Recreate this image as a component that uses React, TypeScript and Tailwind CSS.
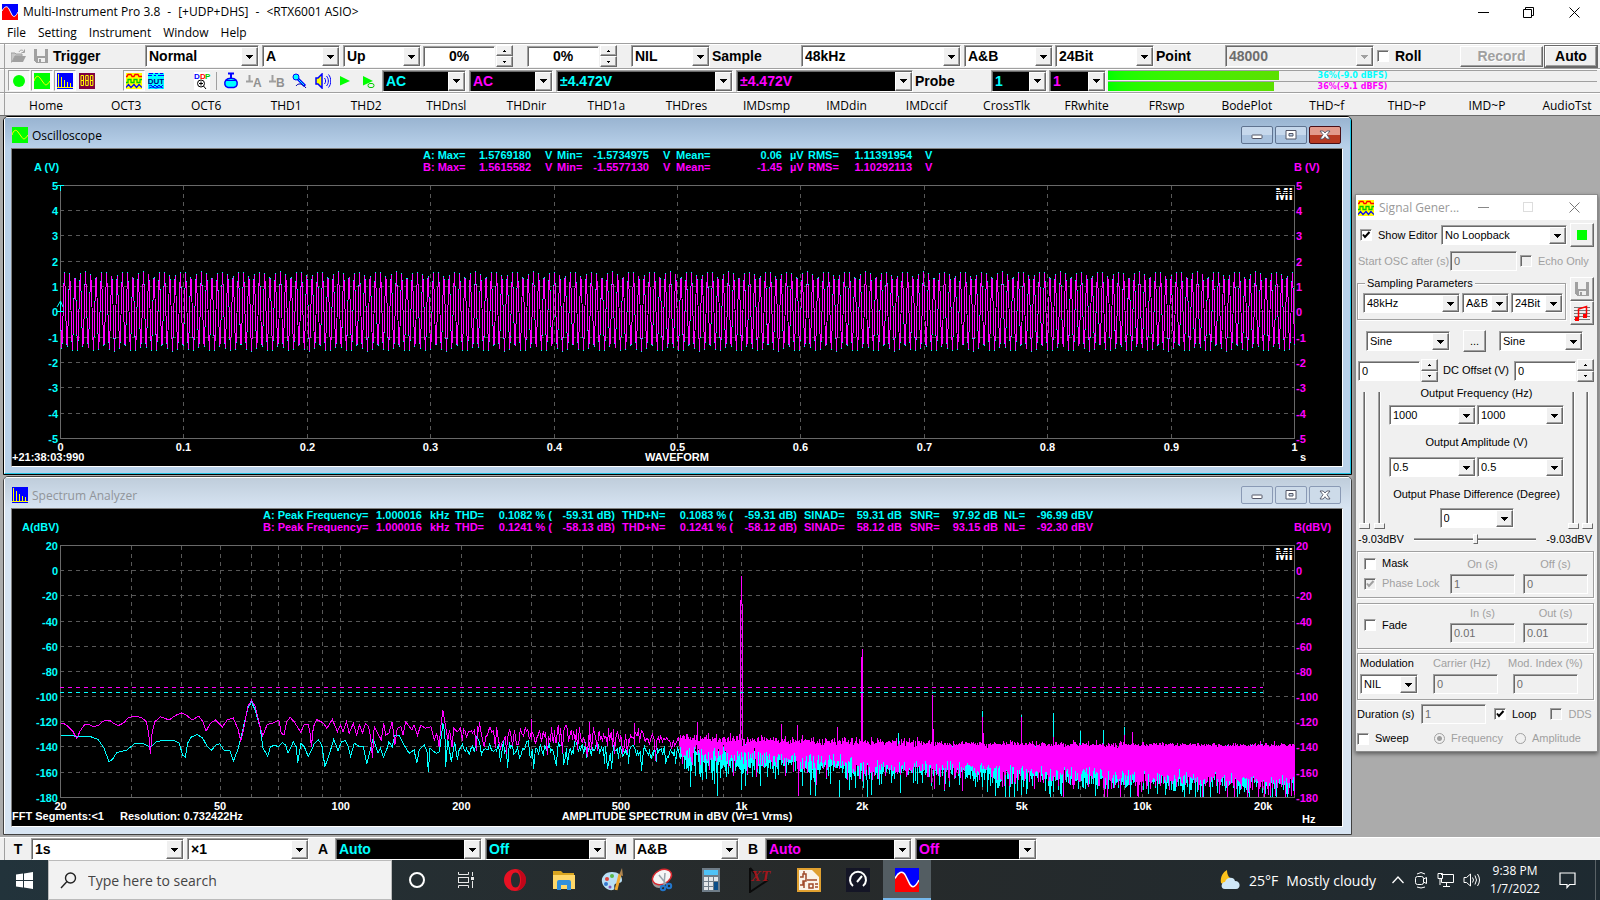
import React from "react";

const sunken =
  "border border-t-[#a0a0a0] border-l-[#a0a0a0] border-r-white border-b-white shadow-[inset_1px_1px_0_#696969]";
const raised =
  "border border-t-white border-l-white border-r-[#696969] border-b-[#696969] bg-[#f0f0f0] shadow-[inset_-1px_-1px_0_#a0a0a0]";

/* ---------- basic controls ---------- */

type SelectProps = {
  value: string;
  label: string;
  className?: string;
  tone?: string;
  disabled?: boolean;
};

function Select({ value, label, className = "", tone = "bg-white text-black", disabled }: SelectProps) {
  return (
    <span className={`relative flex shrink-0 ${sunken} ${tone} ${className}`}>
      <select
        aria-label={label}
        disabled={disabled}
        defaultValue={value}
        className="h-full w-full appearance-none bg-transparent pl-[3px] outline-none"
      >
        <option>{value}</option>
      </select>
      <span
        className={`pointer-events-none absolute top-px right-0 bottom-0 flex w-[17px] items-center justify-center ${raised}`}
      >
        <svg width="7" height="4" viewBox="0 0 7 4" shapeRendering="crispEdges">
          <path d="M0 0H7V1H6V2H5V3H4V4H3V3H2V2H1V1H0Z" fill={disabled ? "#a0a0a0" : "#000"} />
        </svg>
      </span>
    </span>
  );
}

function Spinner({ className = "h-[22px]" }: { className?: string }) {
  return (
    <span className={`flex w-[17px] shrink-0 flex-col ${className}`}>
      <button aria-label="Increase" className={`flex flex-1 items-center justify-center ${raised}`}>
        <svg width="3" height="2" shapeRendering="crispEdges"><path d="M1 0H2V1H3V2H0V1H1Z" /></svg>
      </button>
      <button aria-label="Decrease" className={`flex flex-1 items-center justify-center ${raised}`}>
        <svg width="3" height="2" shapeRendering="crispEdges"><path d="M0 0H3V1H2V2H1V1H0Z" /></svg>
      </button>
    </span>
  );
}

function Box({ value, label, className = "", disabled }: SelectProps) {
  return (
    <input
      aria-label={label}
      defaultValue={value}
      disabled={disabled}
      className={`min-w-0 shrink-0 px-[3px] outline-none ${sunken} ${
        disabled ? "bg-[#f0f0f0] text-[#6d6d6d]" : "bg-white text-black"
      } ${className}`}
    />
  );
}

function Check({
  text,
  checked,
  disabled,
  className = "",
}: {
  text: string;
  checked?: boolean;
  disabled?: boolean;
  className?: string;
}) {
  return (
    <label className={`flex shrink-0 items-center gap-[6px] ${disabled ? "text-[#a0a0a0]" : ""} ${className}`}>
      <span className="relative flex">
        <input
          type="checkbox"
          defaultChecked={checked}
          disabled={disabled}
          className={`size-3 appearance-none ${sunken} ${disabled ? "bg-[#f0f0f0]" : "bg-white"}`}
        />
        {checked && (
          <svg className="pointer-events-none absolute inset-0" width="12" height="12" viewBox="0 0 12 12">
            <path d="M3 5.5L5 8L9.5 3" fill="none" stroke={disabled ? "#a0a0a0" : "#000"} strokeWidth="2" />
          </svg>
        )}
      </span>
      <span>{text}</span>
    </label>
  );
}

/* ---------- small drawings ---------- */

const SineLogo = ({ size = 16 }: { size?: number }) => (
  <svg width={size} height={size} viewBox="0 0 16 16">
    <rect width="16" height="16" fill="#00f" />
    <path d="M0 7C2 3 5 1 7 5L10 11C12 14 14 12 16 8V16H0Z" fill="#f00" />
    <path d="M0 7C2 3 5 1 7 5L10 11C12 14 14 12 16 8" fill="none" stroke="#fff" strokeWidth="1" />
  </svg>
);
const ScopeIcon = () => (
  <svg width="16" height="16" viewBox="0 0 16 16">
    <rect width="16" height="16" fill="#0f0" />
    <path d="M0 8C1.500 3 4 2 6 5L10 10.500C12 13.500 14 11 16 8" fill="none" stroke="#ff0" />
  </svg>
);
const BarsIcon = () => (
  <svg width="16" height="16" viewBox="0 0 16 16" shapeRendering="crispEdges">
    <rect width="16" height="16" fill="#00f" />
    <path d="M1.500 1V14M4.500 4V14M7.500 7V14M10.500 9V14M13.500 10V14M0 14.500H16" stroke="#ff0" />
  </svg>
);
const WavesIcon = () => (
  <svg width="16" height="16" viewBox="0 0 16 16" fill="none">
    <rect width="16" height="16" fill="#ff0" />
    <path d="M0 3.500H1L2 1.500H5L6 3.500H8L9 1.500H12L13 3.500H16" stroke="#f00" strokeWidth="1.300" />
    <path d="M0 9.500H2V6.500H5V9.500H8V6.500H11V9.500H14V6.500H16" stroke="#0c0" strokeWidth="1.300" />
    <path d="M0 14.500L2.500 11.500L5 14.500L8 11.500L10.500 14.500L13 11.500L16 14.500" stroke="#00f" strokeWidth="1.200" />
  </svg>
);
const DigitsIcon = () => (
  <svg width="16" height="16" viewBox="0 0 16 16">
    <rect width="16" height="16" fill="#800040" />
    <path
      d="M2 2.500h2.500v5h-2.500zM2 7.500h2.500v5h-2.500zM6.700 2.500h2.500v5h-2.500zM6.700 7.500h2.500v5h-2.500zM11.400 2.500h2.500v5h-2.500zM11.400 7.500h2.500v5h-2.500z"
      fill="none"
      stroke="#ff0"
      strokeWidth="1"
    />
  </svg>
);
const DutIcon = () => (
  <svg width="16" height="16" viewBox="0 0 16 16">
    <rect width="16" height="16" fill="#0ff" />
    <path d="M1 .5H5M7 .5H10M12 .5H15M0 2.500H4M6 2.500H8M10 2.500H16" stroke="#00f" />
    <text x="8" y="10.500" fontSize="8" fontWeight="700" textAnchor="middle" fill="#000080" fontFamily="Liberation Sans">DUT</text>
    <path d="M1 13L3 12L5 14L7 12L9 14L11 12L13 14L15 12M1 15L4 14L8 15L12 14L15 15" fill="none" stroke="#00f" />
  </svg>
);
const DdpIcon = () => (
  <svg width="18" height="18" viewBox="0 0 18 18">
    <rect x="1" width="16" height="18" fill="#fff" />
    <g fontSize="8" fontWeight="700" fontFamily="Liberation Sans">
      <text x="1" y="7" fill="#00f">D</text>
      <text x="7" y="7" fill="#f00">D</text>
      <text x="12" y="7" fill="#0c0">P</text>
    </g>
    <circle cx="8" cy="11.500" r="3.500" fill="#fff" stroke="#000" />
    <path d="M6 11.500H10M8 9.500V13.500M10.500 14L13 17" stroke="#000" />
  </svg>
);
const BottleIcon = () => (
  <svg width="16" height="17" viewBox="0 0 16 17">
    <path d="M5 1.500H11M8 2V6" stroke="#00f" strokeWidth="2" />
    <path d="M3 8C5 5.500 11 5.500 13 8C15.500 11 14 15 11 15.500H5C2 15 .5 11 3 8Z" fill="#0ff" stroke="#00f" strokeWidth="1.500" />
    <path d="M3 8.500H13" stroke="#00f" />
  </svg>
);
const GroundIcon = ({ letter }: { letter: string }) => (
  <svg width="17" height="16" viewBox="0 0 17 16">
    <path d="M3.500 2V8M0 8.500H7" stroke="#a0a0a0" strokeWidth="2" />
    <text x="7" y="14" fontSize="12" fill="#909090" fontFamily="Liberation Sans">{letter}</text>
  </svg>
);
const MicIcon = () => (
  <svg width="16" height="16" viewBox="0 0 16 16">
    <circle cx="4" cy="4" r="3" fill="#0ff" stroke="#00f" />
    <path d="M6 6L13 13" stroke="#00f" strokeWidth="3" />
    <path d="M6.500 6.500L12 12" stroke="#0ff" />
    <path d="M4 13C6 10 10 10 14 15" fill="none" stroke="#00a" />
  </svg>
);
const SpeakerIcon = () => (
  <svg width="16" height="16" viewBox="0 0 16 16" fill="none">
    <path d="M1 5H3L7 1V15L3 11H1Z" fill="#ff0" stroke="#00f" strokeWidth="1.500" />
    <path d="M9.500 5C11 7 11 9 9.500 11M11.500 3C14 6 14 10 11.500 13M13.500 1.500C16.500 5 16.500 11 13.500 14.500" stroke="#00f" />
  </svg>
);
const PlayIcon = ({ loop }: { loop?: boolean }) => (
  <svg width="16" height="16" viewBox="0 0 16 16">
    <path d="M3 3L13 8L3 12.500Z" fill="#0f0" />
    {loop && <rect x="8" y="10.500" width="6" height="4" rx="2" fill="#f0f0f0" stroke="#0c0" />}
  </svg>
);
const FloppyIcon = () => (
  <svg width="16" height="16" viewBox="0 0 16 16" shapeRendering="crispEdges">
    <path d="M1 1H15V15H3L1 13Z" fill="#a0a0a0" />
    <rect x="4" y="1" width="8" height="7" fill="#f0f0f0" />
    <rect x="5" y="10" width="7" height="4" fill="#f0f0f0" />
    <rect x="6" y="11" width="2" height="3" fill="#a0a0a0" />
  </svg>
);
const FolderIcon = () => (
  <svg width="16" height="16" viewBox="0 0 16 16">
    <path d="M0 14V5H4L5 6H11V8H4L1 14Z" fill="#c8c8c8" stroke="#a0a0a0" />
    <path d="M1 14L4 8H15L12 14Z" fill="#a0a0a0" />
    <path d="M8 4C9 1.500 12 1.500 13 4M13.500 1.500V4.500H10.500" fill="none" stroke="#a0a0a0" />
  </svg>
);

/* ---------- traces ---------- */

function randomSource(seed: number) {
  let s = seed;
  return () => {
    s = (s * 1664525 + 1013904223) % 4294967296;
    return (s + 1) / 4294967297;
  };
}

const PLOT_LEFT = 60.5;
const PLOT_RIGHT = 1294.5;

function sinePath(amplitude: number) {
  const pts: string[] = [];
  for (let i = 0; i <= 1234; i++) {
    const y = 311.5 + Math.sin((2 * Math.PI * i) / 5.27) * amplitude;
    pts.push(`${PLOT_LEFT + i},${y.toFixed(1)}`);
  }
  return pts.join(" ");
}

const DECADE = 400.9;
const freqX = (f: number) => PLOT_LEFT + DECADE * Math.log10(f / 20);
const dbY = (db: number) => 545.5 + ((20 - db) * 251.7) / 200;

const lowB =
  "180,762 188,760 200,768 215,783 227,806 237,783 250,764 262,763 275,770 292,766 305,754 322,750 335,759 350,767 365,759 380,743 400,738 420,744 433,755 440,790 445,853 450,790 458,755 475,740 500,750 520,736 537,729 552,736 568,750 588,738 600,755 610,783 622,760 637,750 658,771 672,750 690,744 705,780 712,815 722,770 733,710 744,690 755,710 768,765 777,798 790,764 810,758 825,750 832,790 840,795 848,755 858,742 870,755 890,787 900,762 912,762 917,790 921,830 927,770 937,749 955,758 967,775 983,748 998,785 1007,765 1015,785 1025,755 1033,790 1045,760 1055,795 1063,765 1073,790 1081,760 1090,770 1096,800 1102,863 1107,770 1120,795 1128,810 1135,760 1141,795 1150,790 1160,755 1168,825 1175,775 1186,770 1192,795 1200,755 1218,780 1225,765 1235,795 1245,765 1258,775 1275,770 1285,810 1292,790 1299,830 1304,770 1310,720 1318,770 1325,810 1330,780 1337,830 1342,775 1352,785 1362,775";
const lowA =
  "180,798 200,796 225,799 265,799 290,808 308,835 322,875 333,868 345,848 375,840 400,820 425,822 445,832 462,815 490,810 515,811 530,820 540,855 548,862 555,820 565,802 583,793 600,805 612,828 625,841 638,826 650,821 662,840 680,842 690,874 705,835 718,780 733,715 744,697 755,720 770,775 778,835 792,858 800,830 812,826 824,830 835,818 845,825 852,850 868,815 876,830 881,878 890,820 900,830 912,860 922,840 930,820 942,810 952,825 961,890 975,850 987,808 1000,842 1010,815 1022,812 1030,830 1037,858 1048,820 1060,828 1075,830 1085,882 1095,840 1104,805 1118,848 1125,835 1134,862 1145,835 1150,815 1160,830 1168,795 1180,795 1195,825 1210,850 1225,840 1233,880 1240,840 1255,825 1263,845 1267,905 1272,835 1290,850 1300,845 1310,760 1316,790 1318,890 1325,810 1335,875 1345,815 1353,870 1358,840";

const lowPoints = (s: string) =>
  s.split(" ").map((p) => {
    const [x, y] = p.split(",").map(Number);
    return `${(x / 2.958).toFixed(1)},${(470 + y / 3).toFixed(1)}`;
  });

type Level = [number, number];
function level(table: Level[], f: number) {
  for (let i = 1; i < table.length; i++) {
    if (f <= table[i][0]) {
      const [f0, d0] = table[i - 1];
      const [f1, d1] = table[i];
      return d0 + ((d1 - d0) * Math.log(f / f0)) / Math.log(f1 / f0);
    }
  }
  return table[table.length - 1][1];
}

function spectrum(low: string, table: Level[], seed: number) {
  const rnd = randomSource(seed);
  const pts = lowPoints(low);
  let x = 462.5;
  while (x <= PLOT_RIGHT) {
    const f = 20 * Math.pow(10, (x - PLOT_LEFT) / DECADE);
    const base = level(table, f);
    const noise = () => base + 10 * Math.log10(-Math.log(rnd()));
    if (f < 700) {
      pts.push(`${x},${dbY(Math.max(base - 18, noise())).toFixed(1)}`);
      x += rnd() < (f < 300 ? 0.5 : 0.85) ? 1 : 2;
      continue;
    }
    const bins = Math.max(2, Math.round((f * Math.LN10) / DECADE / 0.732));
    let hi = -999;
    let lo = 999;
    for (let i = 0; i < bins; i++) {
      const v = noise();
      hi = Math.max(hi, v);
      lo = Math.min(lo, v);
    }
    lo = Math.max(lo, bins < 6 ? base - 18 : -180);
    pts.push(`${x},${dbY(lo).toFixed(1)}`, `${x},${dbY(hi).toFixed(1)}`);
    x += 1;
  }
  return pts.join(" ");
}

const traceA = spectrum(lowA, [[200, -139], [500, -141], [1000, -145], [5000, -148], [24000, -147]], 77);
const traceB = spectrum(lowB, [[200, -126], [500, -131], [1000, -138], [2000, -141], [5000, -144], [24000, -146]], 4242);
const sineA = sinePath(40);
const sineB = sinePath(39);

const CYAN = "#00ffff";
const PINK = "#ff00ff";
const GRID = "#585858";

/* ---------- plots ---------- */

type Cell = [number, string, boolean?];

function Readout({ y, color, cells }: { y: number; color: string; cells: Cell[] }) {
  return (
    <g fill={color}>
      {cells.map(([x, t, end], i) => (
        <text key={i} x={x} y={y} textAnchor={end ? "end" : "start"}>{t}</text>
      ))}
    </g>
  );
}

function MiLogo({ y }: { y: number }) {
  return (
    <g>
      <text x="1293" y={y + 11} textAnchor="end" fontSize="16" fill="#fff">MI</text>
      <path d={`M1272 ${y + 1.5}H1294M1272 ${y + 3.5}H1294M1272 ${y + 5.5}H1294`} stroke="#000" shapeRendering="crispEdges" />
    </g>
  );
}

const plotText = { fontFamily: "'Liberation Sans', Arial, sans-serif", fontSize: 11, fontWeight: 700 } as const;

function ScopePlot() {
  const rows = [5, 4, 3, 2, 1, 0, -1, -2, -3, -4, -5];
  const rowY = (v: number) => Math.floor(311.9 - v * 25.3) + 0.5;
  const cols = [0, 1, 2, 3, 4, 5, 6, 7, 8, 9, 10];
  const colX = (c: number) => Math.floor(PLOT_LEFT + c * 123.4) + 0.5;
  const a: Cell[] = [[423, "A: Max="], [531, "1.5769180", true], [545, "V"], [557, "Min="], [649, "-1.5734975", true], [663, "V"], [676, "Mean="], [782, "0.06", true], [790, "µV"], [808, "RMS="], [912, "1.11391954", true], [925, "V"]];
  const b: Cell[] = [[423, "B: Max="], [531, "1.5615582", true], [545, "V"], [557, "Min="], [649, "-1.5577130", true], [663, "V"], [676, "Mean="], [782, "-1.45", true], [790, "µV"], [808, "RMS="], [912, "1.10292113", true], [925, "V"]];
  return (
    <svg viewBox="12 149 1330 317" className="block h-auto w-full bg-black" {...plotText} role="img" aria-label="Waveform">
      <g stroke={GRID} strokeDasharray="4 4" shapeRendering="crispEdges">
        {rows.slice(1, -1).map((v) => <path key={v} d={`M60 ${rowY(v)}H1295`} />)}
        {cols.slice(1, -1).map((c) => <path key={c} d={`M${colX(c)} 186V438`} />)}
      </g>
      <rect x="60.500" y="185.500" width="1234" height="253" fill="none" stroke="#696969" shapeRendering="crispEdges" />
      <polyline points={sineA} fill="none" stroke={CYAN} shapeRendering="crispEdges" />
      <polyline points={sineB} fill="none" stroke={PINK} shapeRendering="crispEdges" />
      <path d="M57 185.500H64M60.500 186V191M60.500 301V312M57 311.500H64M57 307L60.500 301L63 307" fill="none" stroke={CYAN} />
      <Readout y={159} color={CYAN} cells={a} />
      <Readout y={171} color={PINK} cells={b} />
      <text x="34" y="171" fill={CYAN}>A (V)</text>
      <text x="1294" y="171" fill={PINK}>B (V)</text>
      {rows.map((v) => (
        <g key={v}>
          <text x="58" y={rowY(v) + 4} textAnchor="end" fill={CYAN}>{v}</text>
          <text x="1296" y={rowY(v) + 4} fill={PINK}>{v}</text>
        </g>
      ))}
      <g fill="#fff">
        {cols.map((c) => (
          <text key={c} x={colX(c)} y="451" textAnchor="middle">{c === 0 ? "0" : c === 10 ? "1" : `0.${c}`}</text>
        ))}
        <text x="12" y="461">+21:38:03:990</text>
        <text x="677" y="461" textAnchor="middle">WAVEFORM</text>
        <text x="1300" y="461">s</text>
      </g>
      <MiLogo y={189} />
    </svg>
  );
}

function SpectrumPlot() {
  const rows = [20, 0, -20, -40, -60, -80, -100, -120, -140, -160, -180];
  const rowY = (v: number) => Math.floor(dbY(v)) + 0.5;
  const freqs: number[] = [];
  for (const d of [10, 100, 1000, 10000]) for (let k = 1; k < 10; k++) if (k * d > 20 && k * d <= 20000) freqs.push(k * d);
  const ticks: [number, string][] = [[20, "20"], [50, "50"], [100, "100"], [200, "200"], [500, "500"], [1000, "1k"], [2000, "2k"], [5000, "5k"], [10000, "10k"], [20000, "20k"]];
  const a: Cell[] = [[263, "A: Peak Frequency="], [422, "1.000016", true], [430, "kHz"], [455, "THD="], [552, "0.1082 % (", true], [615, "-59.31 dB)", true], [622, "THD+N="], [733, "0.1083 % (", true], [797, "-59.31 dB)", true], [804, "SINAD="], [902, "59.31 dB", true], [910, "SNR="], [998, "97.92 dB", true], [1004, "NL="], [1093, "-96.99 dBV", true]];
  const b: Cell[] = [[263, "B: Peak Frequency="], [422, "1.000016", true], [430, "kHz"], [455, "THD="], [552, "0.1241 % (", true], [615, "-58.13 dB)", true], [622, "THD+N="], [733, "0.1241 % (", true], [797, "-58.12 dB)", true], [804, "SINAD="], [902, "58.12 dB", true], [910, "SNR="], [998, "93.15 dB", true], [1004, "NL="], [1093, "-92.30 dBV", true]];
  return (
    <svg viewBox="12 509 1330 317" className="block h-auto w-full bg-black" {...plotText} role="img" aria-label="Amplitude spectrum">
      <g stroke={GRID} strokeDasharray="4 4" shapeRendering="crispEdges">
        {rows.slice(1, -1).map((v) => <path key={v} d={`M60 ${rowY(v)}H1295`} />)}
        {freqs.map((f) => <path key={f} d={`M${Math.floor(freqX(f)) + 0.5} 546V797`} />)}
      </g>
      <rect x="60.500" y="545.500" width="1234" height="252" fill="none" stroke="#696969" shapeRendering="crispEdges" />
      <g fill="none" shapeRendering="crispEdges">
        <polyline points={traceA} stroke={CYAN} />
        <path d="M982.500 711V760M1021.500 715V760M1053.500 713V760M1080.500 731V760M1103.500 730V760M1124.500 727V760M898.500 733V760M839.500 780V797M867.500 780V797" stroke={CYAN} />
        <polyline points={traceB} stroke={PINK} />
        <path
          d="M741.500 576V604M740.500 600V760M742.500 604V740M862.500 649V660M861.500 657V750M862.500 657V750M932.500 695V750M933.500 729V750M982.500 717V760M983.500 733V760M1021.500 717V760M1053.500 737V760M1124.500 735V760M1132.500 732V760M531.500 719V740M589.500 722V740M634.500 723V745M697.500 722V745M781.500 724V750M797.500 725V750M837.500 727V750"
          stroke={PINK}
        />
        <path d="M60 687.500H1263" stroke={PINK} strokeDasharray="4 4" />
        <path d="M60 692.500H1263" stroke={CYAN} strokeDasharray="4 4" />
      </g>
      <Readout y={519} color={CYAN} cells={a} />
      <Readout y={531} color={PINK} cells={b} />
      <text x="22" y="531" fill={CYAN}>A(dBV)</text>
      <text x="1294" y="531" fill={PINK}>B(dBV)</text>
      {rows.map((v) => (
        <g key={v}>
          <text x="58" y={rowY(v) + 4} textAnchor="end" fill={CYAN}>{v}</text>
          <text x="1296" y={rowY(v) + 4} fill={PINK}>{v}</text>
        </g>
      ))}
      <g fill="#fff">
        {ticks.map(([f, t]) => <text key={t} x={freqX(f)} y="810" textAnchor="middle">{t}</text>)}
        <text x="12" y="820">FFT Segments:&lt;1</text>
        <text x="120" y="820">Resolution: 0.732422Hz</text>
        <text x="677" y="820" textAnchor="middle">AMPLITUDE SPECTRUM in dBV (Vr=1 Vrms)</text>
        <text x="1302" y="823">Hz</text>
      </g>
      <MiLogo y={549} />
    </svg>
  );
}

/* ---------- child windows ---------- */

function CaptionButton({ kind, active }: { kind: "min" | "max" | "close"; active?: boolean }) {
  const red = active && kind === "close";
  return (
    <button
      aria-label={kind}
      className={`flex h-[18px] w-8 items-center justify-center rounded-[2px] border ${
        red
          ? "border-[#4a0f16] bg-linear-to-b from-[#e39a8c] from-50% to-[#b83a22] to-50%"
          : active
            ? "border-[#5f7390] bg-linear-to-b from-[#c6d8ec] from-50% to-[#a9c2de] to-50%"
            : "border-[#8a9ab5] bg-[#cddbe9]"
      }`}
    >
      <svg width="12" height="10" viewBox="0 0 12 10" fill="#fff" stroke="#535666">
        {kind === "min" && <rect x="1" y="5" width="10" height="3.500" rx=".5" />}
        {kind === "max" && <path fillRule="evenodd" d="M1 .5H11V9H1ZM4 3.500V6H8V3.500Z" />}
        {kind === "close" && <path d="M1 1H4.200L6 3L7.800 1H11L8 4.700L11 9H7.800L6 6.700L4.200 9H1L4 4.700Z" strokeWidth=".9" />}
      </svg>
    </button>
  );
}

function ChildWindow({ title, icon, active, children }: { title: string; icon: React.ReactNode; active?: boolean; children: React.ReactNode }) {
  return (
    <section className={`rounded-t-[5px] border ${active ? "border-black" : "border-[#404040]"}`}>
      <div
        className={`rounded-t-[4px] border border-t-white border-l-white pr-[7px] pb-[6px] pl-[6px] ${
          active ? "border-r-[#22c5e5] border-b-[#22c5e5] bg-[#b9d1ea]" : "border-r-[#d7e4f2] border-b-[#d7e4f2] bg-[#d7e4f2]"
        } `}
      >
        <header
          className={`-mr-[7px] -ml-[6px] flex h-[30px] items-center gap-1 pt-[4px] pr-[9px] pl-[7px] ${
            active ? "bg-linear-to-b from-[#99b4d1] to-[#b9d1ea] text-black" : "bg-linear-to-b from-[#bfcddb] to-[#d7e4f2] text-[#909499]"
          }`}
        >
          {icon}
          <h2 className="flex-1 pt-px text-[12px]">{title}</h2>
          <div className="flex gap-[2px]">
            <CaptionButton kind="min" active={active} />
            <CaptionButton kind="max" active={active} />
            <CaptionButton kind="close" active={active} />
          </div>
        </header>
        <div className="border border-t-[#808080] border-r-white border-b-white border-l-[#808080]">{children}</div>
      </div>
    </section>
  );
}

/* ---------- signal generator ---------- */

const fieldSet = "border border-[#a0a0a0] shadow-[1px_1px_0_#fff,inset_1px_1px_0_#fff]";

function VSlider({ label }: { label: string }) {
  return (
    <input
      type="range"
      aria-label={label}
      defaultValue={0}
      className="h-[137px] w-[13px] appearance-none bg-[linear-gradient(90deg,#a0a0a0_33%,#696969_33%,#696969_66%,#fff_66%)] bg-[length:3px_137px] bg-top bg-no-repeat [direction:rtl] [writing-mode:vertical-lr] [&::-webkit-slider-thumb]:h-[6px] [&::-webkit-slider-thumb]:w-[11px] [&::-webkit-slider-thumb]:appearance-none [&::-webkit-slider-thumb]:border [&::-webkit-slider-thumb]:border-t-white [&::-webkit-slider-thumb]:border-r-[#696969] [&::-webkit-slider-thumb]:border-b-[#696969] [&::-webkit-slider-thumb]:border-l-white [&::-webkit-slider-thumb]:bg-[#f0f0f0]"
    />
  );
}

function SignalGenerator() {
  const small = "h-[20px] text-[11px]";
  return (
    <section className="w-[243px] border border-[#8a8a8a] bg-[#f0f0f0] font-['Liberation_Sans',Arial,sans-serif] text-[11px] leading-[13px] text-black shadow-[0_2px_4px_rgba(0,0,0,0.45)]">
      <header className="flex h-[25px] items-center bg-white pr-[17px] pl-[2px] font-['Open_Sans',sans-serif] text-[12px] text-[#999]">
        <WavesIcon />
        <h2 className="ml-[5px] flex-1">Signal Gener...</h2>
        <button aria-label="Minimize"><svg width="11" height="11"><path d="M0 5.500H11" stroke="#888" /></svg></button>
        <button aria-label="Maximize" className="ml-[34px]"><svg width="11" height="11"><rect x=".5" y=".5" width="9" height="9" fill="none" stroke="#ddd" /></svg></button>
        <button aria-label="Close" className="ml-[35px]"><svg width="11" height="11"><path d="M.5 .5L10.500 10.500M10.500 .5L.5 10.500" stroke="#777" /></svg></button>
      </header>
      <div className="flex flex-col pt-[3px] pr-[3px] pl-px">
        <div className="flex h-6 items-center pl-[3px]">
          <Check text="Show Editor" checked className="w-[81px]" />
          <Select label="Loopback" value="No Loopback" className={`w-[126px] ${small}`} />
          <button aria-label="Start" className={`ml-auto flex size-6 items-center justify-center ${raised}`}>
            <span className="size-[10px] bg-[#0f0]" />
          </button>
        </div>
        <div className="mt-1 flex h-5 items-center pl-px text-[#a0a0a0]">
          <span className="w-[92px]">Start OSC after (s)</span>
          <Box label="Start OSC after" value="0" disabled className={`w-[67px] ${small}`} />
          <Check text="Echo Only" disabled className="ml-[3px]" />
        </div>
        <div className="mt-[6px] flex justify-between">
          <fieldset className={`mt-0 h-[43px] w-[209px] pl-[5px] ${fieldSet}`}>
            <legend className="ml-[2px] bg-[#f0f0f0] px-[2px]">Sampling Parameters</legend>
            <div className="mt-[3px] flex gap-[2px]">
              <Select label="Sampling rate" value="48kHz" className={`w-[97px] ${small}`} />
              <Select label="Channels" value="A&B" className={`w-[47px] ${small}`} />
              <Select label="Bit depth" value="24Bit" className={`w-[52px] ${small}`} />
            </div>
          </fieldset>
          <div className="flex flex-col">
            <button aria-label="Save" className={`flex size-6 items-center justify-center ${raised}`}><FloppyIcon /></button>
            <button aria-label="Tune" className={`flex size-6 items-center justify-center ${raised}`}>
              <svg width="18" height="18" viewBox="0 0 18 18">
                <path d="M1 3.500H17M1 6.500H17M1 9.500H17M1 12.500H17M1 15.500H17" stroke="#777" />
                <path d="M5.500 14V5L13.500 2.500V12" fill="none" stroke="#f00" strokeWidth="1.500" />
                <path d="M2 13H6V17H2ZM10 10H14V14H10Z" fill="#f00" />
              </svg>
            </button>
          </div>
        </div>
        <div className="mt-[5px] flex h-[22px] items-center pl-[9px]">
          <Select label="Waveform A" value="Sine" className={`w-[84px] ${small}`} />
          <button className={`mx-[13px] flex h-[22px] w-[23px] items-center justify-center ${raised}`}>...</button>
          <Select label="Waveform B" value="Sine" className={`w-[84px] ${small}`} />
        </div>
        <div className="mt-[7px] flex h-[23px] items-center pl-px">
          <Box label="DC offset A" value="0" className={`w-[62px] ${small}`} />
          <Spinner className="ml-px h-[23px]" />
          <span className="flex-1 text-center">DC Offset (V)</span>
          <Box label="DC offset B" value="0" className={`w-[62px] ${small}`} />
          <Spinner className="ml-px h-[23px]" />
        </div>
        <div className="mt-[5px] flex h-[143px] justify-between">
          <div className="flex gap-[2px] pt-[5px] pl-px"><VSlider label="Coarse level A" /><VSlider label="Fine level A" /></div>
          <div className="flex flex-1 flex-col items-center">
            <span>Output Frequency (Hz)</span>
            <div className="mt-[5px] flex gap-px">
              <Select label="Frequency A" value="1000" className={`w-[87px] ${small}`} />
              <Select label="Frequency B" value="1000" className={`w-[87px] ${small}`} />
            </div>
            <span className="mt-[11px]">Output Amplitude (V)</span>
            <div className="mt-[8px] flex gap-px">
              <Select label="Amplitude A" value="0.5" className={`w-[87px] ${small}`} />
              <Select label="Amplitude B" value="0.5" className={`w-[87px] ${small}`} />
            </div>
            <span className="mt-[11px] whitespace-nowrap">Output Phase Difference (Degree)</span>
            <Select label="Phase difference" value="0" className={`mt-[7px] w-[74px] ${small}`} />
          </div>
          <div className="flex gap-px pt-[5px]"><VSlider label="Fine level B" /><VSlider label="Coarse level B" /></div>
        </div>
        <div className="flex h-[19px] items-center justify-between pb-px pl-px">
          <span>-9.03dBV</span>
          <input
            type="range"
            aria-label="Balance"
            className="h-3 w-[122px] appearance-none bg-[linear-gradient(#a0a0a0_33%,#696969_33%,#696969_66%,#fff_66%)] bg-[length:100%_3px] bg-center bg-no-repeat [&::-webkit-slider-thumb]:h-[10px] [&::-webkit-slider-thumb]:w-[5px] [&::-webkit-slider-thumb]:appearance-none [&::-webkit-slider-thumb]:border [&::-webkit-slider-thumb]:border-t-white [&::-webkit-slider-thumb]:border-r-[#696969] [&::-webkit-slider-thumb]:border-b-[#696969] [&::-webkit-slider-thumb]:border-l-white [&::-webkit-slider-thumb]:bg-[#f0f0f0]"
          />
          <span className="pr-[2px]">-9.03dBV</span>
        </div>
        <div className={`mt-[2px] flex h-[47px] pl-[6px] ${fieldSet}`}>
          <div className="flex w-[86px] flex-col gap-[7px] pt-[5px]">
            <Check text="Mask" />
            <Check text="Phase Lock" checked disabled />
          </div>
          <div className="flex gap-[8px] pt-[6px] text-center text-[#a0a0a0]">
            <label className="flex w-[65px] flex-col gap-[3px]">On (s)<Box label="On" value="1" disabled className={small} /></label>
            <label className="flex w-[65px] flex-col gap-[3px]">Off (s)<Box label="Off" value="0" disabled className={small} /></label>
          </div>
        </div>
        <div className={`mt-[5px] flex h-[46px] items-center pb-[2px] pl-[6px] ${fieldSet}`}>
          <Check text="Fade" className="w-[86px]" />
          <div className="flex gap-[8px] text-center text-[#a0a0a0]">
            <label className="flex w-[65px] flex-col gap-[3px]">In (s)<Box label="Fade in" value="0.01" disabled className={small} /></label>
            <label className="flex w-[65px] flex-col gap-[3px]">Out (s)<Box label="Fade out" value="0.01" disabled className={small} /></label>
          </div>
        </div>
        <div className={`mt-[4px] flex h-[47px] pt-[3px] pl-[2px] ${fieldSet}`}>
          <label className="flex w-[73px] flex-col gap-[4px]">Modulation<Select label="Modulation" value="NIL" className={`w-[58px] ${small}`} /></label>
          <label className="flex w-[75px] flex-col gap-[4px] text-[#a0a0a0]">Carrier (Hz)<Box label="Carrier" value="0" disabled className={`w-[65px] ${small}`} /></label>
          <label className="flex flex-col items-center gap-[4px] text-[#a0a0a0]">Mod. Index (%)<Box label="Modulation index" value="0" disabled className={`w-[65px] ${small}`} /></label>
        </div>
        <div className="mt-[4px] flex h-5 items-center">
          <span className="w-[64px]">Duration (s)</span>
          <Box label="Duration" value="1" disabled className={`w-[65px] ${small}`} />
          <Check text="Loop" checked className="ml-[8px]" />
          <Check text="DDS" disabled className="ml-[14px]" />
        </div>
        <div className="mt-[4px] flex h-[23px] items-center pb-[2px]">
          <Check text="Sweep" className="w-[77px]" />
          <label className="flex w-[81px] items-center gap-[6px] text-[#a0a0a0]">
            <input type="radio" name="sweep" defaultChecked disabled className="size-[11px] appearance-none rounded-full border border-[#a0a0a0] bg-[radial-gradient(#a0a0a0_2px,#f0f0f0_3px)]" />
            Frequency
          </label>
          <label className="flex items-center gap-[6px] text-[#a0a0a0]">
            <input type="radio" name="sweep" disabled className="size-[11px] appearance-none rounded-full border border-[#a0a0a0]" />
            Amplitude
          </label>
        </div>
      </div>
    </section>
  );
}

/* ---------- toolbars ---------- */

const bar = "flex w-full items-center border-t border-t-[#a0a0a0] bg-[#f0f0f0] shadow-[inset_0_1px_0_#fff]";
const sys = "font-['Liberation_Sans',Arial,sans-serif] font-bold text-[14px] leading-[20px]";
const Grip = () => <span className="h-full w-[5px] shrink-0 border-r border-[#a0a0a0]" />;
const blackCyan = "bg-black text-[#00ffff]";
const blackPink = "bg-black text-[#ff00ff]";

function TriggerBar() {
  return (
    <div className={`h-[25px] pr-[3px] ${bar} ${sys}`}>
      <Grip />
      <button aria-label="Open" className="ml-[6px] shrink-0"><FolderIcon /></button>
      <button aria-label="Save" className="ml-[6px] shrink-0"><FloppyIcon /></button>
      <span className="w-[92px] shrink-0 pl-[4px]">Trigger</span>
      <Select label="Trigger mode" value="Normal" className="ml-[4px] h-[22px] w-[114px]" />
      <Select label="Trigger source" value="A" className="ml-[3px] h-[22px] w-[78px]" />
      <Select label="Trigger edge" value="Up" className="ml-[3px] h-[22px] w-[78px]" />
      <Box label="Trigger level" value="0%" className="ml-[2px] h-[21px] w-[72px] text-center" />
      <Spinner className="ml-px h-[22px]" />
      <Box label="Trigger delay" value="0%" className="ml-[14px] h-[21px] w-[72px] text-center" />
      <Spinner className="ml-px h-[22px]" />
      <Select label="Noise rejection" value="NIL" className="ml-[14px] h-[22px] w-[79px]" />
      <span className="w-[91px] shrink-0 pl-[2px]">Sample</span>
      <Select label="Sampling frequency" value="48kHz" className="h-[22px] w-[160px]" />
      <Select label="Sampling channels" value="A&B" className="ml-[3px] h-[22px] w-[89px]" />
      <Select label="Sampling bits" value="24Bit" className="ml-[2px] h-[22px] w-[99px]" />
      <span className="w-[71px] shrink-0 pl-[2px]">Point</span>
      <Select label="Record length" value="48000" disabled tone="bg-[#f0f0f0] text-[#6d6d6d]" className="h-[22px] min-w-[100px] flex-1" />
      <Check text="Roll" className="mr-[1px] ml-[3px] w-[82px]" />
      <button disabled className={`h-[21px] w-[83px] shrink-0 text-[#a0a0a0] [text-shadow:1px_1px_0_#fff] leading-none ${raised}`}>Record</button>
      <button className={`ml-[2px] h-[21px] w-[52px] shrink-0 leading-none outline-1 outline-[#696969] ${raised}`}>Auto</button>
    </div>
  );
}

function ToolButton({ label, pressed, className = "", children }: { label: string; pressed?: boolean; className?: string; children: React.ReactNode }) {
  return (
    <button
      aria-label={label}
      className={`flex h-[21px] w-[22px] shrink-0 items-center justify-center ${
        pressed ? "border border-t-[#a0a0a0] border-r-white border-b-white border-l-[#a0a0a0] bg-[#f8f8f8]" : ""
      } ${className}`}
    >
      {children}
    </button>
  );
}

function Meter({ text, width, color }: { text: string; width: string; color: string }) {
  return (
    <div role="meter" aria-label={text} className="relative flex h-[10px] items-center justify-center border-t border-[#a0a0a0] bg-[#f0f0f0]">
      <span className={`absolute inset-y-0 left-0 bg-linear-to-r from-[#00ff00] to-[#5be000] ${width}`} />
      <span className={`relative font-['DejaVu_Sans',sans-serif] text-[8px] leading-[9px] font-bold ${color}`}>{text}</span>
    </div>
  );
}

function InstrumentBar() {
  return (
    <div className={`h-6 pr-[3px] ${bar} ${sys}`}>
      <Grip />
      <ToolButton label="Run" pressed className="ml-[3px]"><span className="size-[12px] rounded-full bg-[#0f0]" /></ToolButton>
      <ToolButton label="Oscilloscope" pressed className="ml-[1px]"><ScopeIcon /></ToolButton>
      <ToolButton label="Spectrum Analyzer" pressed className="ml-[1px]"><BarsIcon /></ToolButton>
      <ToolButton label="Multimeter"><DigitsIcon /></ToolButton>
      <ToolButton label="Signal Generator" pressed className="ml-[25px]"><WavesIcon /></ToolButton>
      <ToolButton label="Device Test Plan"><DutIcon /></ToolButton>
      <ToolButton label="Derived Data Point" className="ml-[24px]"><DdpIcon /></ToolButton>
      <span className="ml-[3px] h-[18px] w-px shrink-0 bg-[#a0a0a0]" />
      <ToolButton label="Calibration" className="ml-[3px]"><BottleIcon /></ToolButton>
      <ToolButton label="Zero A" className="ml-px"><GroundIcon letter="A" /></ToolButton>
      <ToolButton label="Zero B" className="ml-px"><GroundIcon letter="B" /></ToolButton>
      <ToolButton label="Input" className="ml-px"><MicIcon /></ToolButton>
      <ToolButton label="Output" className="ml-px"><SpeakerIcon /></ToolButton>
      <ToolButton label="Play"><PlayIcon /></ToolButton>
      <ToolButton label="Play loop" className="ml-px"><PlayIcon loop /></ToolButton>
      <Select label="Coupling A" value="AC" tone={blackCyan} className="ml-[3px] h-[22px] w-[84px]" />
      <Select label="Coupling B" value="AC" tone={blackPink} className="ml-[3px] h-[22px] w-[84px]" />
      <Select label="Range A" value="±4.472V" tone={blackCyan} className="ml-[3px] h-[22px] w-[177px]" />
      <Select label="Range B" value="±4.472V" tone={blackPink} className="ml-[3px] h-[22px] w-[177px]" />
      <span className="w-[78px] shrink-0 pl-[2px]">Probe</span>
      <Select label="Probe A" value="1" tone={blackCyan} className="h-[22px] w-[56px]" />
      <Select label="Probe B" value="1" tone={blackPink} className="ml-[2px] h-[22px] w-[57px]" />
      <div className="ml-[2px] flex flex-1 flex-col gap-px">
        <Meter text="36%(-9.0 dBFS)" width="w-[35%]" color="text-[#00ffff]" />
        <Meter text="36%(-9.1 dBFS)" width="w-[34%]" color="text-[#ff00ff]" />
      </div>
    </div>
  );
}

const panels = ["Home", "OCT3", "OCT6", "THD1", "THD2", "THDnsl", "THDnir", "THD1a", "THDres", "IMDsmp", "IMDdin", "IMDccif", "CrossTlk", "FRwhite", "FRswp", "BodePlot", "THD~f", "THD~P", "IMD~P", "AudioTst"];

function SweepBar() {
  return (
    <div className={`h-[23px] shrink-0 ${sys} flex items-center border-t border-white bg-[#f0f0f0]`}>
      <Grip />
      <span className="w-[26px] text-center">T</span>
      <Select label="Sweep time" value="1s" className="h-[22px] w-[153px]" />
      <Select label="Horizontal zoom" value="×1" className="ml-[3px] h-[22px] w-[122px]" />
      <span className="w-[26px] pl-[2px] text-center">A</span>
      <Select label="A scale" value="Auto" tone={blackCyan} className="h-[22px] w-[147px]" />
      <Select label="A filter" value="Off" tone={blackCyan} className="ml-[3px] h-[22px] w-[122px]" />
      <span className="w-[26px] pl-[2px] text-center">M</span>
      <Select label="Mode" value="A&B" className="h-[22px] w-[106px]" />
      <span className="w-[26px] pl-[2px] text-center">B</span>
      <Select label="B scale" value="Auto" tone={blackPink} className="h-[22px] w-[147px]" />
      <Select label="B filter" value="Off" tone={blackPink} className="ml-[3px] h-[22px] w-[122px]" />
    </div>
  );
}

/* ---------- taskbar ---------- */

const apps: { name: string; icon: React.ReactNode }[] = [
  { name: "Cortana", icon: <svg width="18" height="18"><circle cx="9" cy="9" r="7" fill="none" stroke="#fff" strokeWidth="2" /></svg> },
  {
    name: "Task View",
    icon: (
      <svg width="18" height="18" fill="none" stroke="#e8e8e8">
        <path d="M1.500 1V3.500H11.500V1M1.500 17V14.500H11.500V17M15.500 1V5M15.500 10V17" />
        <rect x="1.500" y="6.500" width="10" height="5" />
        <path d="M14 7.500H17" strokeWidth="3" />
      </svg>
    ),
  },
  {
    name: "Opera",
    icon: (
      <svg width="24" height="24" viewBox="0 0 24 24">
        <path fillRule="evenodd" d="M12 1A11 11 0 1 0 12 23A11 11 0 1 0 12 1ZM12.500 4.500C15.500 4.500 17 8 17 12C17 16 15.500 19.500 12.500 19.500C9.500 19.500 8 16 8 12C8 8 9.500 4.500 12.500 4.500Z" fill="#e81123" />
        <path d="M14 1.500C20 3 23 7 23 12C23 17 20 21 14 22.500C17 20 18 16 18 12C18 8 17 4 14 1.500Z" fill="#a70014" opacity=".6" />
      </svg>
    ),
  },
  {
    name: "File Explorer",
    icon: (
      <svg width="24" height="22" viewBox="0 0 24 22">
        <path d="M1 2H9L11 4H22V20H1Z" fill="#d9a520" />
        <path d="M1 6H23V20H1Z" fill="#ffd869" />
        <path d="M5 21V13Q5 11 7 11H17Q19 11 19 13V21H15V16H9V21Z" fill="#2f8fdd" />
      </svg>
    ),
  },
  {
    name: "Paint",
    icon: (
      <svg width="26" height="24" viewBox="0 0 26 24">
        <path d="M12 4C5 4 1 9 2 14C3 19 8 23 13 22C16 21 13 18 15 16C18 14 22 16 22 12C22 7 18 4 12 4Z" fill="#b9dff5" />
        <circle cx="7" cy="11" r="2" fill="#e0423b" /><circle cx="12" cy="8" r="2" fill="#57b847" /><circle cx="6" cy="16" r="2" fill="#3579d0" /><circle cx="10" cy="19" r="1.500" fill="#8752b5" />
        <path d="M16 22L20 6" stroke="#f0a830" strokeWidth="3" /><path d="M19 7L22 0L23 8Z" fill="#b08650" />
      </svg>
    ),
  },
  {
    name: "Snipping Tool",
    icon: (
      <svg width="24" height="24" viewBox="0 0 24 24">
        <path d="M2 13Q3 20 9 20L14 19L14 15Z" fill="#9a9a9a" />
        <ellipse cx="12" cy="9" rx="10" ry="7" fill="#f5f5f5" stroke="#d8292f" strokeWidth="1.500" transform="rotate(-25 12 9)" />
        <path d="M9 7L17 17M15 5L14 17" stroke="#9aa4ac" strokeWidth="1.500" />
        <circle cx="13" cy="20" r="2.200" fill="none" stroke="#2277cc" strokeWidth="2" /><circle cx="19" cy="18" r="2.200" fill="none" stroke="#2277cc" strokeWidth="2" />
      </svg>
    ),
  },
  {
    name: "Calculator",
    icon: (
      <svg width="18" height="24" viewBox="0 0 18 24">
        <rect width="18" height="24" fill="#6e7c87" /><rect x="2" y="2" width="14" height="5" fill="#4fc3f7" />
        <path d="M2 9H6V13H2ZM7 9H11V13H7ZM12 9H16V13H12ZM2 14H6V18H2ZM7 14H11V18H7ZM2 19H6V22H2ZM7 19H11V22H7Z" fill="#e3e7ea" /><rect x="12" y="14" width="4" height="8" fill="#0b4f8a" />
      </svg>
    ),
  },
  {
    name: "XT",
    icon: (
      <svg width="24" height="26" viewBox="0 0 24 26">
        <path d="M2 1V25L20 13M2 1L8 8" fill="none" stroke="#0a0a0a" strokeWidth="2" />
        <text x="3" y="14" fontSize="15" fontWeight="700" fontStyle="italic" fontFamily="Liberation Serif" fill="#a3151a">XT</text>
      </svg>
    ),
  },
  {
    name: "Circuit Editor",
    icon: (
      <svg width="24" height="24" viewBox="0 0 24 24" fill="none">
        <path d="M0 0H24V24H0Z" fill="#e0a030" /><path d="M2 2H15L22 9V22H2Z" fill="#faf3e8" />
        <path d="M3 9H6V6H9V13H6V17H3M7 3V6M7 13V20M10 12H20M12 16H16V20H12ZM18 16H21M18 19H21" stroke="#a04a28" strokeWidth="1.500" />
      </svg>
    ),
  },
  {
    name: "Speed Test",
    icon: (
      <svg width="24" height="24" viewBox="0 0 24 24" fill="none">
        <rect width="24" height="24" fill="#141526" />
        <path d="M7 18A8 8 0 1 1 17 18M11 14L16 8" stroke="#fff" strokeWidth="2" />
      </svg>
    ),
  },
];

function Taskbar() {
  return (
    <footer className="flex h-10 shrink-0 items-center bg-linear-to-r from-[#22333b] via-[#272a2a] to-[#1e2a31] font-['Open_Sans',sans-serif] text-white">
      <button aria-label="Start" className="flex h-full w-12 items-center justify-center">
        <svg width="17" height="17" viewBox="0 0 17 17" fill="#fff"><path d="M0 2.500L7 1.500V8H0ZM8 1.400L17 0V8H8ZM0 9H7V15.500L0 14.500ZM8 9H17V17L8 15.600Z" /></svg>
      </button>
      <label className="flex h-full w-[344px] items-center gap-[11px] border border-[#bbb] bg-[#f2f2f2] pl-[11px]">
        <svg width="17" height="17" fill="none" stroke="#222" strokeWidth="1.400"><circle cx="10.500" cy="6" r="5" /><path d="M7 9.500L1 16" /></svg>
        <input aria-label="Search" placeholder="Type here to search" className="min-w-0 flex-1 bg-transparent text-[14px] outline-none placeholder:text-[#444]" />
      </label>
      {apps.map((a) => (
        <button key={a.name} aria-label={a.name} className="flex h-full w-[49px] items-center justify-center">{a.icon}</button>
      ))}
      <button aria-label="Multi-Instrument" className="ml-px flex h-full w-12 items-center justify-center border-b-2 border-[#76b9ed] bg-[#535d62] pt-[2px]"><SineLogo size={24} /></button>
      <div className="flex-1" />
      <button className="flex items-center gap-[8px] text-[14px] whitespace-nowrap">
        <svg width="22" height="22" viewBox="0 0 22 22">
          <path d="M8 1C4 3 1 8 2 14C8 17 13 15 15 10C10 10 8 6 8 1Z" fill="#fcc21b" />
          <path d="M6 20C1 20 2 13 6 13C7 8 15 7 16 12C22 12 22 20 17 20Z" fill="#cfe7f8" />
        </svg>
        <span>25°F</span>
        <span>Mostly cloudy</span>
      </button>
      <div className="ml-[15px] flex items-center gap-[9px]">
        <svg width="14" height="14" fill="none" stroke="#fff" strokeWidth="1.300"><path d="M1.500 10L7 4L12.500 10" /></svg>
        <svg width="14" height="18" fill="none" stroke="#fff"><rect x="1.500" y="5.500" width="8" height="8" rx="2" /><path d="M9.500 8L12.500 6.500V12.500L9.500 11M3 3Q7 0 11 3M3 16Q7 18 11 16" /></svg>
        <svg width="17" height="16" fill="none" stroke="#fff"><path d="M4 2.500H16.500V10.500H4.500V7M9.500 11V14.500M6 14.500H13M1 1.500H5.500V6.500H1ZM3 7V13" /></svg>
        <svg width="18" height="16" fill="none" stroke="#fff"><path d="M1 5.500H3.500L7.500 2V14L3.500 10.500H1ZM9.500 5.500Q11.500 8 9.500 10.500M12 3.500Q15 8 12 12.500M14.500 2Q18.500 8 14.500 14" /></svg>
      </div>
      <button className="ml-[10px] flex w-[48px] flex-col items-center text-[12px] leading-[18px] whitespace-nowrap">
        <span>9:38 PM</span>
        <span>1/7/2022</span>
      </button>
      <button aria-label="Notifications" className="ml-[20px] mr-[19px]">
        <svg width="17" height="17" fill="none" stroke="#fff" strokeWidth="1.200"><path d="M1 1H16V12.500H10.500L8 15.500V12.500H1Z" /></svg>
      </button>
      <span className="mr-[4px] h-full w-px bg-[#5a6266]" />
    </footer>
  );
}

/* ---------- page ---------- */

export default function App() {
  return (
    <div className="flex min-h-screen flex-col bg-[#ababab] font-['Open_Sans','Noto_Sans',sans-serif] text-[12px] text-black">
      <header className="flex h-6 shrink-0 items-center bg-white pr-[20px] pl-[2px]">
        <SineLogo />
        <h1 className="ml-[5px] flex flex-1 gap-[7px]">
          <span>Multi-Instrument Pro 3.8</span>
          <span>-</span>
          <span>[+UDP+DHS]</span>
          <span>-</span>
          <span>&lt;RTX6001 ASIO&gt;</span>
        </h1>
        <button aria-label="Minimize"><svg width="11" height="11"><path d="M0 5.500H11" stroke="#000" /></svg></button>
        <button aria-label="Restore" className="ml-[34px]"><svg width="11" height="11" fill="none" stroke="#000"><path d="M.5 2.500H8.500V10.500H.5ZM2.500 2.500V.5H10.500V8.500H8.500" /></svg></button>
        <button aria-label="Close" className="ml-[35px]"><svg width="11" height="11"><path d="M.5 .5L10.500 10.500M10.500 .5L.5 10.500" stroke="#000" /></svg></button>
      </header>
      <nav className="flex h-[19px] shrink-0 items-center gap-[12px] bg-white pb-px pl-[7px]">
        {["File", "Setting", "Instrument", "Window", "Help"].map((m) => <button key={m}>{m}</button>)}
      </nav>
      <TriggerBar />
      <InstrumentBar />
      <div className={`h-[23px] overflow-hidden ${bar}`}>
        <Grip />
        <div className="-mr-[7px] ml-px grid flex-1 grid-cols-20 pt-[4px]">
          {panels.map((p) => <button key={p} className="text-center">{p}</button>)}
        </div>
      </div>
      <main className="flex flex-1 border-t border-[#696969]">
        <div className="flex min-w-0 flex-1 flex-col gap-px pl-[3px]">
          <ChildWindow title="Oscilloscope" icon={<ScopeIcon />} active><ScopePlot /></ChildWindow>
          <ChildWindow title="Spectrum Analyzer" icon={<BarsIcon />}><SpectrumPlot /></ChildWindow>
        </div>
        <div className="w-[248px] shrink-0 pt-[78px] pl-[3px]"><SignalGenerator /></div>
      </main>
      <SweepBar />
      <Taskbar />
    </div>
  );
}
